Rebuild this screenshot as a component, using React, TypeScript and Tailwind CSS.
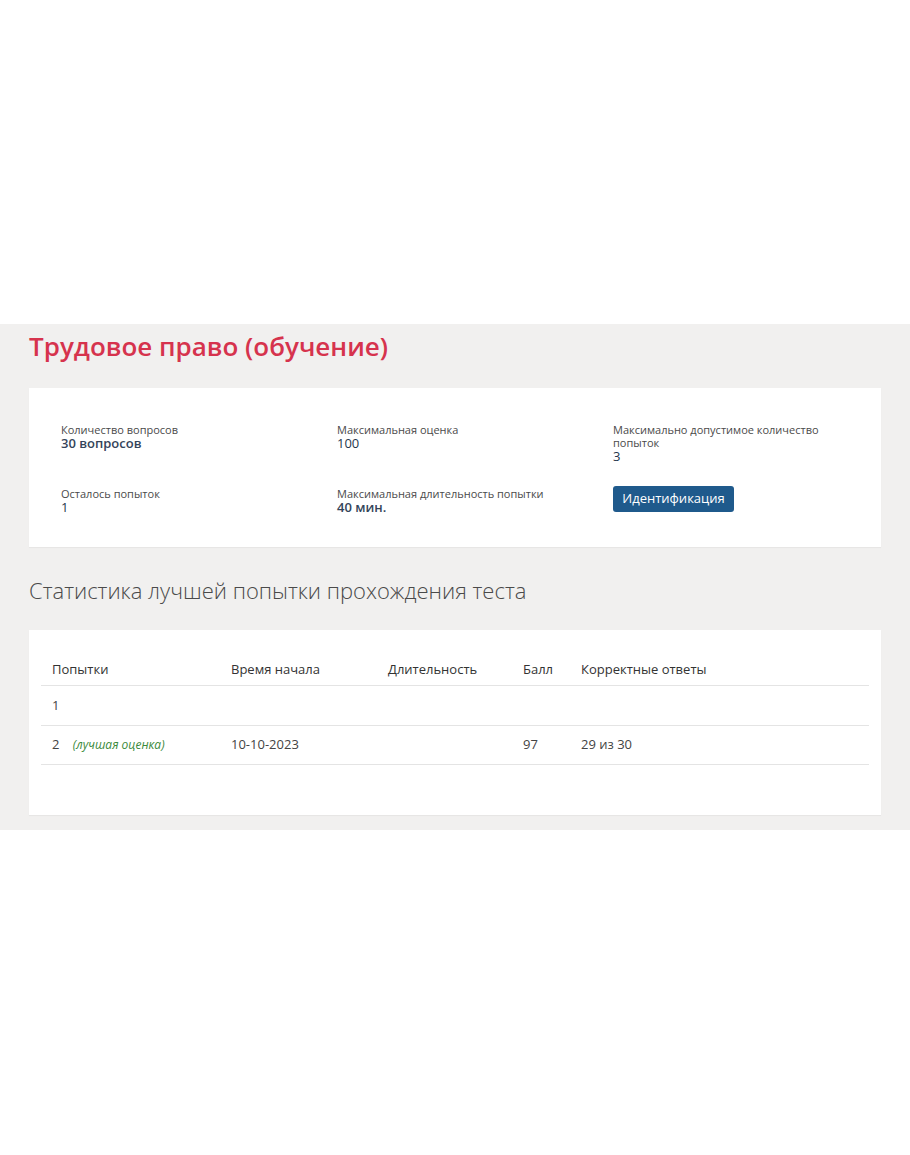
import React from 'react'

const font = { fontFamily: '"Open Sans", "Noto Sans", sans-serif' }

interface InfoItemProps {
  label: string
  value: string
  strong?: boolean
}

function InfoItem({ label, value, strong }: InfoItemProps) {
  return (
    <div className="pr-10">
      <div className="text-[11px] leading-[13px] text-[#4a4a4a]">{label}</div>
      <div className={`text-[13px] leading-[14px] ${strong ? 'text-[#34445a] font-semibold' : 'text-[#26364d]'}`}>{value}</div>
    </div>
  )
}

const cols = 'grid grid-cols-[179px_157px_135px_58px_1fr]'

export default function App() {
  return (
    <div className="w-[910px] min-h-[1155px] bg-white" style={font}>
      <div className="h-[324px]" />

      <section className="bg-[#f1f0ef] px-[29px] pt-[2px] pb-[15px] w-[910px]">
        <h1 className="text-[26px] leading-[40px] font-semibold text-[#d6334d]">
          Трудовое право (обучение)
        </h1>

        <div className="mt-[22px] bg-white h-[159px] pl-[32px] pt-[35px] shadow-[0_1px_1px_rgba(0,0,0,0.04)]">
          <div className="grid grid-cols-[276px_276px_1fr] gap-y-[22px]">
            <InfoItem label="Количество вопросов" value="30 вопросов" strong />
            <InfoItem label="Максимальная оценка" value="100" />
            <InfoItem label="Максимально допустимое количество попыток" value="3" />
            <div className="pt-[2px]">
              <InfoItem label="Осталось попыток" value="1" />
            </div>
            <div className="pt-[2px]">
              <InfoItem label="Максимальная длительность попытки" value="40 мин." strong />
            </div>
            <div>
              <button className="h-[26px] w-[121px] rounded-[3px] bg-[#1f5a8c] text-white text-[13px]">
                Идентификация
              </button>
            </div>
          </div>
        </div>

        <h2 className="mt-[28px] text-[22px] leading-[30px] font-light text-[#4a4a4a]">
          Статистика лучшей попытки прохождения теста
        </h2>

        <div className="mt-[25px] bg-white h-[185px] px-[12px] pt-[24px] shadow-[0_1px_1px_rgba(0,0,0,0.04)]">
          <div className="text-[13px] text-[#333333]">
            <div className={`${cols} h-[32px] items-center border-b border-[#e4e4e4] pl-[11px]`}>
              <div>Попытки</div>
              <div>Время начала</div>
              <div>Длительность</div>
              <div>Балл</div>
              <div>Корректные ответы</div>
            </div>
            <div className={`${cols} h-[40px] items-center border-b border-[#e4e4e4] pl-[11px] text-[#444444]`}>
              <div>1</div>
              <div />
              <div />
              <div />
              <div />
            </div>
            <div className={`${cols} h-[39px] items-center border-b border-[#e4e4e4] pl-[11px] text-[#444444]`}>
              <div>
                2 <span className="ml-[10px] text-[12px] italic text-[#3b8a3b]">(лучшая оценка)</span>
              </div>
              <div>10-10-2023</div>
              <div />
              <div>97</div>
              <div>29 из 30</div>
            </div>
          </div>
        </div>
      </section>
    </div>
  )
}
